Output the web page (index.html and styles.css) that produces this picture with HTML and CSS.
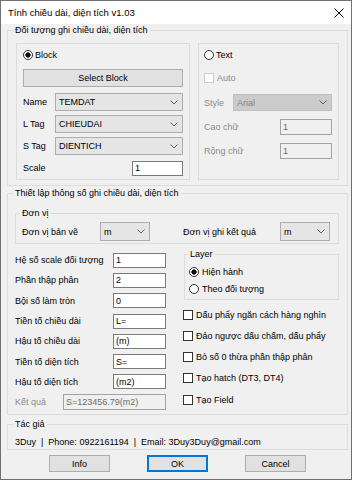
FILE: index.html
```html
<!DOCTYPE html>
<html lang="vi">

<head>
    <meta charset="UTF-8">
    <meta name="viewport" content="width=device-width, initial-scale=1.0">
    <title>Tính chiều dài, diện tích v1.03</title>
    <link rel="stylesheet" href="styles.css">
</head>

<body>

    <div class="window">
        <div class="titlebar">
            <span class="title">Tính chiều dài, diện tích v1.03</span>
            <svg class="close" width="10" height="10" viewBox="0 0 10 10">
                <path d="M0.5 0.5 L9.5 9.5 M9.5 0.5 L0.5 9.5" stroke="#000" stroke-width="1" fill="none" />
            </svg>
        </div>

        <div class="client">

            <fieldset class="group group-object">
                <legend>Đối tượng ghi chiều dài, diện tích</legend>
                <div class="object-row">

                    <div class="box block-box">
                        <div class="radio-row"><span class="radio on"></span>Block</div>
                        <button class="btn btn-select">Select Block</button>
                        <div class="field-row first">
                            <span class="lbl">Name</span>
                            <div class="combo combo-tag">TEMDAT
                                <svg class="chev" width="8" height="5" viewBox="0 0 8 5"><path d="M0.5 0.5 L4 4 L7.5 0.5" /></svg>
                            </div>
                        </div>
                        <div class="field-row">
                            <span class="lbl">L Tag</span>
                            <div class="combo combo-tag">CHIEUDAI
                                <svg class="chev" width="8" height="5" viewBox="0 0 8 5"><path d="M0.5 0.5 L4 4 L7.5 0.5" /></svg>
                            </div>
                        </div>
                        <div class="field-row">
                            <span class="lbl">S Tag</span>
                            <div class="combo combo-tag">DIENTICH
                                <svg class="chev" width="8" height="5" viewBox="0 0 8 5"><path d="M0.5 0.5 L4 4 L7.5 0.5" /></svg>
                            </div>
                        </div>
                        <div class="field-row">
                            <span class="lbl">Scale</span>
                            <div class="input input-scale">1</div>
                        </div>
                    </div>

                    <div class="box text-box">
                        <div class="radio-row"><span class="radio"></span>Text</div>
                        <div class="check-row disabled auto-row"><span class="check"></span>Auto</div>
                        <div class="field-row style-row disabled">
                            <span>Style</span>
                            <div class="combo combo-off">Arial
                                <svg class="chev" width="8" height="5" viewBox="0 0 8 5"><path d="M0.5 0.5 L4 4 L7.5 0.5" /></svg>
                            </div>
                        </div>
                        <div class="field-row size-row disabled">
                            <span>Cao chữ</span>
                            <div class="input input-off">1</div>
                        </div>
                        <div class="field-row size-row disabled">
                            <span>Rộng chữ</span>
                            <div class="input input-off">1</div>
                        </div>
                    </div>

                </div>
            </fieldset>

            <fieldset class="group group-setting">
                <legend>Thiết lập thông số ghi chiều dài, diện tích</legend>

                <fieldset class="group group-unit">
                    <legend>Đơn vị</legend>
                    <div class="unit-row">
                        <span class="unit-lbl">Đơn vị bản vẽ</span>
                        <div class="combo combo-unit">m
                            <svg class="chev" width="8" height="5" viewBox="0 0 8 5"><path d="M0.5 0.5 L4 4 L7.5 0.5" /></svg>
                        </div>
                        <span class="unit-lbl unit-lbl-right">Đơn vị ghi kết quả</span>
                        <div class="combo combo-unit">m
                            <svg class="chev" width="8" height="5" viewBox="0 0 8 5"><path d="M0.5 0.5 L4 4 L7.5 0.5" /></svg>
                        </div>
                    </div>
                </fieldset>

                <div class="columns">
                    <div class="col-left">
                        <div class="opt-row"><span>Hệ số scale đối tượng</span><div class="input input-opt">1</div></div>
                        <div class="opt-row"><span>Phần thập phân</span><div class="input input-opt">2</div></div>
                        <div class="opt-row"><span>Bội số làm tròn</span><div class="input input-opt">0</div></div>
                        <div class="opt-row"><span>Tiền tố chiều dài</span><div class="input input-opt">L=</div></div>
                        <div class="opt-row"><span>Hậu tố chiều dài</span><div class="input input-opt">(m)</div></div>
                        <div class="opt-row"><span>Tiền tố diện tích</span><div class="input input-opt">S=</div></div>
                        <div class="opt-row"><span>Hậu tố diện tích</span><div class="input input-opt">(m2)</div></div>
                        <div class="opt-row disabled"><span>Kết quả</span><div class="input input-off input-result">S=123456.79(m2)</div></div>
                    </div>

                    <div class="col-right">
                        <fieldset class="group group-layer">
                            <legend>Layer</legend>
                            <div class="layer-row"><span class="radio on"></span>Hiện hành</div>
                            <div class="layer-row"><span class="radio"></span>Theo đối tượng</div>
                        </fieldset>
                        <div class="checks">
                            <div class="check-row"><span class="check"></span>Dấu phẩy ngăn cách hàng nghìn</div>
                            <div class="check-row"><span class="check"></span>Đảo ngược dấu chấm, dấu phẩy</div>
                            <div class="check-row"><span class="check"></span>Bỏ số 0 thừa phần thập phân</div>
                            <div class="check-row"><span class="check"></span>Tạo hatch (DT3, DT4)</div>
                            <div class="check-row"><span class="check"></span>Tạo Field</div>
                        </div>
                    </div>
                </div>
            </fieldset>

            <fieldset class="group group-author">
                <legend>Tác giả</legend>
                <div class="author">3Duy &nbsp;|&nbsp; Phone: 0922161194 &nbsp;|&nbsp; Email: 3Duy3Duy@gmail.com</div>
            </fieldset>

            <div class="buttons">
                <button class="btn btn-dialog">Info</button>
                <button class="btn btn-dialog btn-default">OK</button>
                <button class="btn btn-dialog">Cancel</button>
            </div>

        </div>
    </div>

</body>

</html>
```

FILE: styles.css
```css
* {
    box-sizing: border-box;
}

body {
    margin: 0;
    font-family: "Liberation Sans", Arial, sans-serif;
    font-size: 9px;
    line-height: 12px;
    color: #000;
    background-color: #fff;
}

.window {
    width: 352px;
    height: 480px;
    border: 1px solid #6f6f6f;
    background-color: #f0f0f0;
}

.titlebar {
    height: 23px;
    display: flex;
    align-items: center;
    justify-content: space-between;
    padding: 0 7px;
    background-color: #fff;
}

.title {
    font-size: 9.5px;
}

.client {
    padding: 0 3px 0 6px;
}

/* group boxes */
.group {
    margin: 0;
    padding: 0;
    min-inline-size: 0;
    border: 1px solid #dcdcdc;
}

.group legend {
    padding: 0 2px;
    line-height: 12px;
}

.box {
    border: 1px solid #dcdcdc;
}

.disabled {
    color: #8c8c8c;
}

/* first group */
.group-object {
    padding: 7px 8px 5px 8px;
}

.group-object legend {
    margin-left: -3px;
}

.object-row {
    display: flex;
    gap: 8px;
    height: 137px;
}

.block-box {
    width: 174px;
    padding: 4px 6px 0 6px;
    display: flex;
    flex-direction: column;
}

.text-box {
    flex: 1;
    padding: 4px 6px 0 5px;
    display: flex;
    flex-direction: column;
}

.radio-row {
    height: 14px;
    display: flex;
    align-items: center;
}

.radio {
    width: 10px;
    height: 10px;
    margin-right: 2px;
    flex: none;
    border: 1px solid #333;
    border-radius: 50%;
    background-color: #fff;
}

.radio.on {
    background: radial-gradient(circle, #111 0 2.4px, #fff 2.9px);
}

.check-row {
    height: 14px;
    display: flex;
    align-items: center;
}

.check {
    width: 10px;
    height: 10px;
    margin-right: 3px;
    flex: none;
    border: 1px solid #333;
    background-color: #fff;
}

.check-row.disabled .check {
    border-color: #cccccc;
}

.btn {
    font-family: inherit;
    font-size: 9px;
    padding: 0;
    color: #000;
    background-color: #e1e1e1;
    border: 1px solid #adadad;
}

.btn-select {
    height: 18px;
    margin-top: 7px;
}

.field-row {
    height: 18px;
    margin-top: 4px;
    display: flex;
    align-items: center;
}

.field-row.first {
    margin-top: 6px;
}

.lbl {
    width: 32px;
    flex: none;
}

.combo {
    height: 100%;
    display: flex;
    align-items: center;
    justify-content: space-between;
    padding: 0 4px 0 3px;
    background-color: #e5e5e5;
    border: 1px solid #adadad;
}

.combo-tag {
    flex: 1;
}

.chev path {
    fill: none;
    stroke: #5f5f5f;
    stroke-width: 1;
}

.input {
    height: 15px;
    display: flex;
    align-items: center;
    padding: 0 2px;
    background-color: #fff;
    border: 1px solid #7a7a7a;
}

.input-scale {
    width: 51px;
    margin-left: auto;
}

.auto-row {
    margin-top: 9px;
}

.style-row {
    height: 17px;
    margin-top: 9px;
}

.combo-off {
    width: 99px;
    margin-left: auto;
    color: #838383;
    background-color: #cccccc;
    border-color: #bfbfbf;
}

.size-row {
    height: 16px;
    margin-top: 8px;
}

.input-off {
    color: #6d6d6d;
    background-color: #f0f0f0;
    border-color: #a3a3a3;
}

.size-row .input-off {
    width: 52px;
    height: 16px;
    margin-left: auto;
}

/* second group */
.group-setting {
    margin-top: 1px;
    padding: 0 8px 2px 7px;
}

.group-setting > legend {
    margin-left: -2px;
}

.group-unit {
    margin-top: 8px;
    padding: 3px 6px 2px 6px;
}

.group-unit legend {
    margin-left: -2px;
}

.unit-row {
    height: 19px;
    display: flex;
    align-items: center;
}

.unit-lbl {
    width: 78px;
}

.unit-lbl-right {
    width: 97px;
    margin-left: 33px;
}

.combo-unit {
    width: 50px;
}

.columns {
    display: grid;
    grid-template-columns: 151px 155px;
    column-gap: 18px;
    align-items: start;
}

.col-left {
    margin-top: 6px;
}

.opt-row {
    height: 20.3px;
    display: flex;
    align-items: center;
}

.input-opt {
    width: 53px;
    margin-left: auto;
}

.input-result {
    width: 103px;
    height: 16px;
    margin-left: auto;
}

.col-right {
    margin-top: 4px;
}

.group-layer {
    padding: 3px 4px 2px 4px;
}

.group-layer legend {
    margin-left: -1px;
}

.layer-row {
    height: 17px;
    display: flex;
    align-items: center;
}

.layer-row .radio {
    margin-right: 3px;
}

.checks {
    margin-top: 4px;
    margin-left: -1px;
}

.checks .check-row {
    height: 21.25px;
}

/* author */
.group-author {
    margin-top: 3px;
    padding: 6px 7px 1px 7px;
}

.group-author legend {
    margin-left: -2px;
}

.author {
    height: 12px;
    white-space: nowrap;
}

.buttons {
    margin-top: 5px;
    display: flex;
    justify-content: center;
    gap: 37px;
}

.btn-dialog {
    width: 61px;
    height: 17px;
}

.btn-default {
    border-color: #0078d7;
    box-shadow: inset 0 0 0 1px #0078d7;
}
```
